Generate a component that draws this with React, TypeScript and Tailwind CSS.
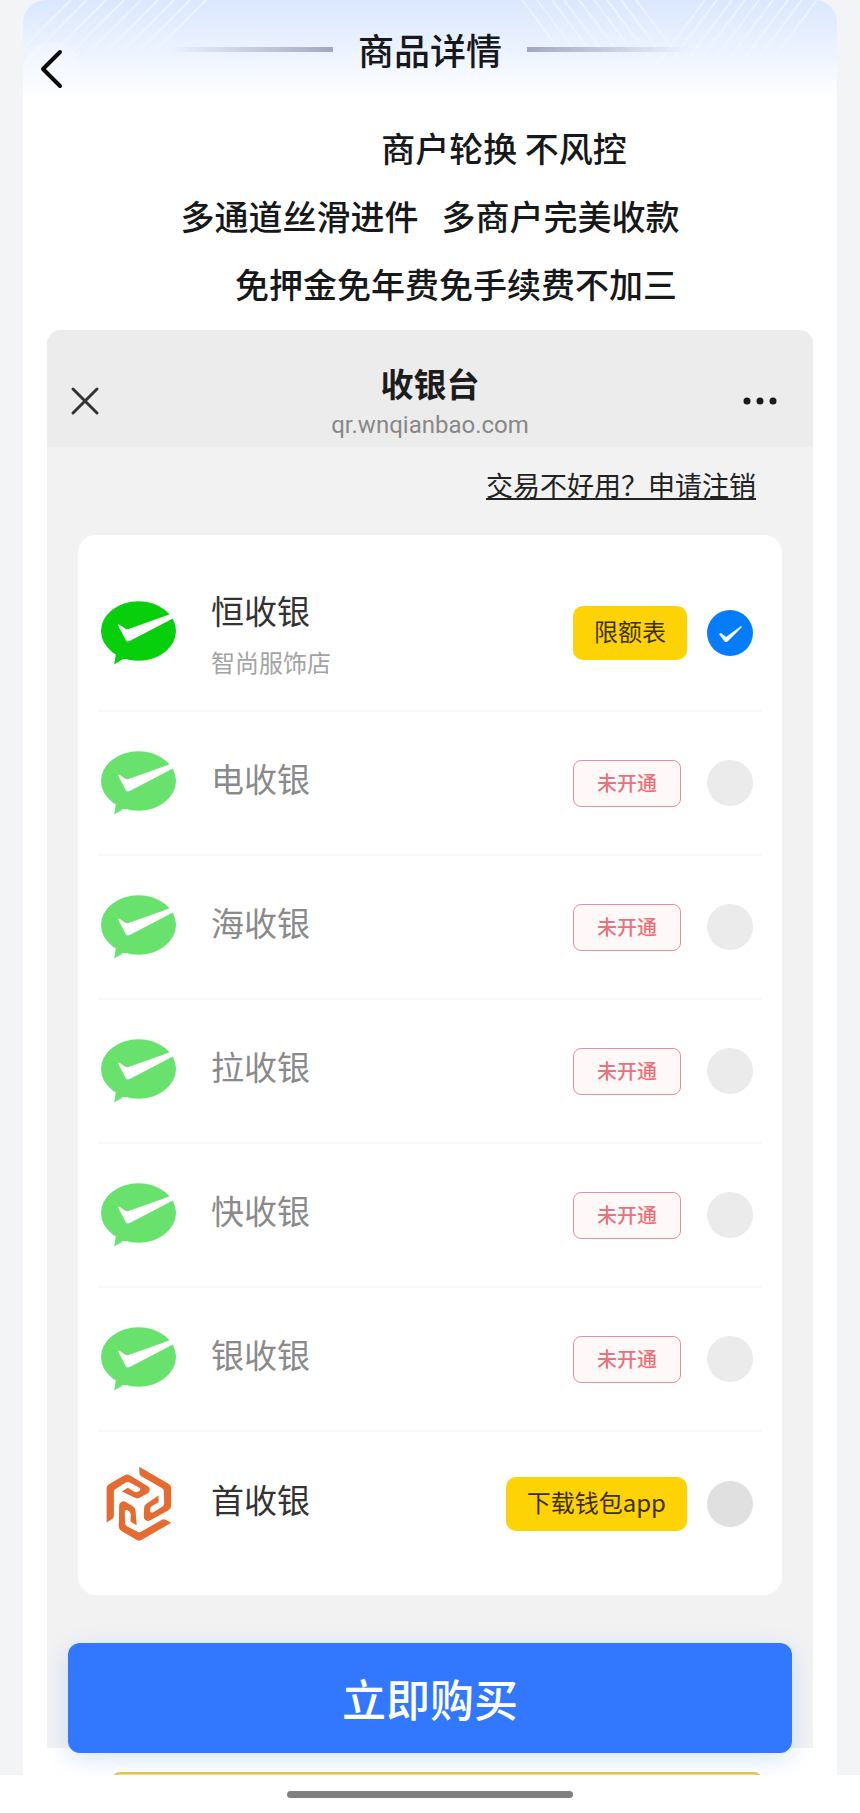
import React from "react";

type Channel = {
  id: string;
  name: string;
  shop?: string;
  action?: string;
  selected?: boolean;
};

const channels: Channel[] = [
  { id: "heng", name: "恒收银", shop: "智尚服饰店", action: "限额表", selected: true },
  { id: "dian", name: "电收银" },
  { id: "hai", name: "海收银" },
  { id: "la", name: "拉收银" },
  { id: "kuai", name: "快收银" },
  { id: "yin", name: "银收银" },
  { id: "shou", name: "首收银", action: "下载钱包app" },
];

const PayIcon = ({ active }: { active: boolean }) => (
  <svg viewBox="0 0 222 188" className="h-16 w-[75px]" aria-hidden="true">
    <g fill={active ? "#07cf0c" : "#68e26c"}>
      <ellipse cx="111" cy="88" rx="111" ry="88" />
      <path d="M34 142 L44 157 L39 187 L66 171 L90 172 Z" />
    </g>
    <path d="M50 70 Q52 67 56 70 L70 80 Q77 85 86 81 L206 38 L217 49 L85 118 Q77 122 73 115 Z" fill="#fff" />
  </svg>
);

const WalletIcon = () => (
  <svg viewBox="16 12 204 236" className="ml-1 h-[78px] w-[68px]" aria-hidden="true">
    {["rotate(0 118 130)", "rotate(120 118 130)", "rotate(240 118 130)"].map((turn) => (
      <path
        key={turn}
        transform={turn}
        d="M20 186 V82 Q20 74 27 70 L74 43 Q82 39 90 43 L146 77 Q155 88 146 97 L120 111 Q113 115 106 111 L66 92 L84 81 L104 93 Q112 96 119 91 Q125 86 119 81 L90 65 Q84 62 78 65 L46 85 Q42 88 42 93 V166 Q42 172 36 176 Z"
        fill="#e46b32"
      />
    ))}
  </svg>
);

const HeaderStripes = () => (
  <svg
    viewBox="0 0 814 100"
    preserveAspectRatio="xMidYMin slice"
    className="absolute inset-0 h-[100px] w-full"
    aria-hidden="true"
  >
    <defs>
      <linearGradient id="fade" x1="0" y1="0" x2="0" y2="80" gradientUnits="userSpaceOnUse">
        <stop offset="0" stopColor="#fff" stopOpacity="0.5" />
        <stop offset="1" stopColor="#fff" stopOpacity="0" />
      </linearGradient>
    </defs>
    <g stroke="url(#fade)" strokeWidth="2" fill="none">
      {[48, 64, 83, 101, 118, 135, 151, 167, 183].map((x) => (
        <path key={x} d={`M${x} 0 l-80 80`} />
      ))}
      {[499, 514, 529, 541, 556, 571, 584, 598, 613].map((x) => (
        <path key={x} d={`M${x} 0 l60 80`} />
      ))}
      {[682, 694, 709, 722, 736, 750, 765, 779, 794].map((x) => (
        <path key={x} d={`M${x} 0 l-60 80`} />
      ))}
    </g>
  </svg>
);

const ChannelRow = ({ channel }: { channel: Channel }) => {
  const { id, name, shop, action, selected } = channel;
  const opened = Boolean(action);

  return (
    <li className="flex h-36 items-center border-b-2 border-[#f9f9f9] pr-[9px] pl-[3px] first:h-[157px] last:border-b-0">
      <div className="flex w-[110px] shrink-0">
        {id === "shou" ? <WalletIcon /> : <PayIcon active={Boolean(selected)} />}
      </div>
      <div className={`flex-1 ${shop ? "pt-[6px]" : "pb-[10px]"}`}>
        <label
          htmlFor={id}
          className={`block text-[33px] leading-[38px] ${opened ? "text-[#333]" : "text-[#8a8a8a]"}`}
        >
          {name}
        </label>
        {shop && <p className="mt-[14px] text-2xl leading-[38px] text-[#a3a3a3]">{shop}</p>}
      </div>
      {opened ? (
        <button className="mr-5 h-[54px] rounded-[10px] bg-[#fdd305] px-[21px] pb-1 text-2xl text-[#3d2f0c]">
          {action}
        </button>
      ) : (
        <span className="mr-[26px] flex h-[47px] w-[108px] items-center justify-center rounded-lg border border-[#e2929a] bg-[#fff8f8] text-xl font-medium text-[#e5737c]">
          未开通
        </span>
      )}
      <span className="relative flex">
        <input
          id={id}
          type="radio"
          name="channel"
          defaultChecked={selected}
          className={`peer size-[46px] appearance-none rounded-full checked:bg-[#057dfb] ${opened ? "bg-[#e0e0e0]" : "bg-[#ebebeb]"}`}
        />
        <svg
          viewBox="0 0 46 46"
          className="pointer-events-none absolute inset-0 hidden size-[46px] peer-checked:block"
          aria-hidden="true"
        >
          <path d="M12 24 L14 23 L19 27 L34 16 L35 17 L20 32 L18 32 Z" fill="#fff" />
        </svg>
      </span>
    </li>
  );
};

const Cashier = () => (
  <section className="mx-6 rounded-t-[14px] bg-[#f2f2f2] pb-[153px]">
    <header className="flex h-[117px] items-center justify-between rounded-t-[14px] bg-[#ececec] px-[23px] pt-6">
      <button aria-label="关闭" className="flex w-12">
        <svg viewBox="0 0 30 30" className="size-[30px]" fill="none" stroke="#333" strokeWidth="3" strokeLinecap="round">
          <path d="M3 3 L27 27 M27 3 L3 27" />
        </svg>
      </button>
      <div className="pt-1 text-center">
        <h2 className="text-[33px] leading-10 font-bold text-[#1c1c1c]">收银台</h2>
        <p className="mt-1 font-[Roboto] text-2xl leading-9 text-[#888]">qr.wnqianbao.com</p>
      </div>
      <button aria-label="更多" className="flex w-12">
        <svg viewBox="0 0 36 8" className="h-2 w-9" fill="#1a1a1a">
          <circle cx="5" cy="4" r="3.5" />
          <circle cx="18" cy="4" r="3.5" />
          <circle cx="31" cy="4" r="3.5" />
        </svg>
      </button>
    </header>
    <div className="flex h-[88px] items-start justify-end pt-5 pr-[57px]">
      <a
        href="#cancel"
        className="text-[27px] leading-9 text-[#222] underline decoration-2 underline-offset-2"
      >
        交易不好用？申请注销
      </a>
    </div>
    <ul className="mx-[31px] rounded-[18px] bg-white px-5 pt-5 pb-[19px]">
      {channels.map((channel) => (
        <ChannelRow key={channel.id} channel={channel} />
      ))}
    </ul>
  </section>
);

const App: React.FC = () => {
  return (
    <div className="bg-white font-['Noto_Sans_CJK_SC',sans-serif]">
      <div className="relative overflow-hidden bg-[#f2f4f6] px-[23px]">
        <main className="relative overflow-hidden rounded-t-[22px] bg-white pb-[27px]">
          <header className="relative flex h-[100px] items-center justify-center gap-[25px] bg-linear-to-b from-[#dae7fe] to-white pb-[2px]">
            <HeaderStripes />
            <span className="relative h-[5px] w-[163px] bg-linear-to-l from-[#a3a8bd] to-transparent" />
            <h1 className="relative text-4xl leading-[50px] font-medium text-[#16181c]">商品详情</h1>
            <span className="relative h-[5px] w-[163px] bg-linear-to-r from-[#a3a8bd] to-transparent" />
            <button
              aria-label="返回"
              className="absolute top-[41px] left-[1px] flex size-14 items-center justify-center rounded-full bg-white/20"
            >
              <svg viewBox="0 0 24 40" className="h-10 w-6" fill="none" stroke="#0c0c0c" strokeWidth="4" strokeLinecap="round" strokeLinejoin="round">
                <path d="M20 3 L3 20 L20 37" />
              </svg>
            </button>
          </header>

          <div className="pt-[14px] pb-3 text-center text-[34px] leading-[68px] font-medium whitespace-pre text-[#16181a]">
            <p className="pl-[148px]">商户轮换 不风控</p>
            <p>{"多通道丝滑进件   多商户完美收款"}</p>
            <p className="pl-[52px]">免押金免年费免手续费不加三</p>
          </div>

          <Cashier />
        </main>

        {/* top edge of the next banner */}
        <div className="absolute right-[98px] -bottom-2 left-[112px] h-[11px] rounded-t-lg border-t-2 border-[#e3c64a] bg-[#f5e27c]" />

        <button className="absolute inset-x-[68px] bottom-[22px] h-[110px] rounded-xl bg-[#3278ff] text-[44px] font-medium text-white shadow-[0_6px_24px_rgba(50,120,255,0.2)]">
          立即购买
        </button>
      </div>

      <footer className="flex h-[38px] items-center justify-center">
        <span className="h-[7px] w-1/3 rounded-full bg-[#808080]" />
      </footer>
    </div>
  );
};

export default App;
